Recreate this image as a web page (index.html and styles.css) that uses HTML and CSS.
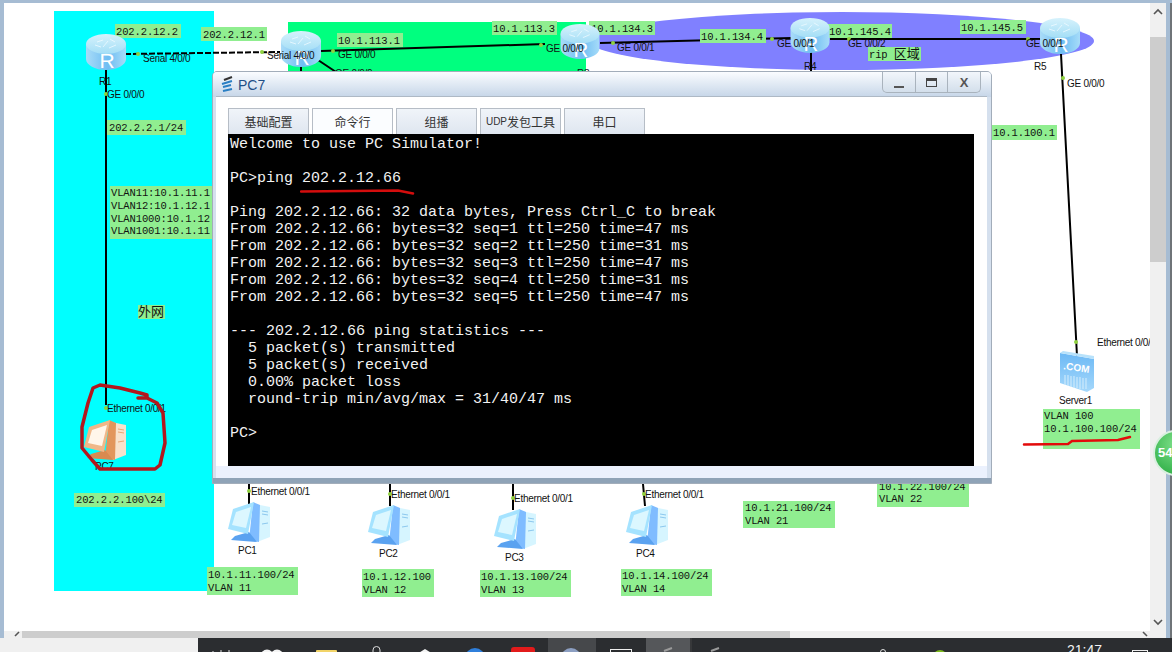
FILE: index.html
```html
<!DOCTYPE html>
<html lang="zh">
<head>
<meta charset="utf-8">
<title>PC7</title>
<link rel="stylesheet" href="styles.css">
</head>
<body>
<svg class="defs" width="0" height="0" aria-hidden="true">
  <defs>
    <linearGradient id="rBody" x1="0" y1="0" x2="1" y2="0">
      <stop offset="0" stop-color="#a9dcf8"/><stop offset=".55" stop-color="#6fbdf2"/><stop offset="1" stop-color="#a6dcf9"/>
    </linearGradient>
    <linearGradient id="rTop" x1="0" y1="0" x2="0" y2="1">
      <stop offset="0" stop-color="#d6f2fc"/><stop offset="1" stop-color="#a4def6"/>
    </linearGradient>
    <linearGradient id="sFront" x1="0" y1="0" x2="0" y2="1">
      <stop offset="0" stop-color="#6db9f5"/><stop offset="1" stop-color="#a5d8fb"/>
    </linearGradient>
    <symbol id="router" viewBox="0 0 40 36">
      <path d="M0 10V25C0 31 9 36 20 36S40 31 40 25V10Z" fill="url(#rBody)"/>
      <ellipse cx="20" cy="10" rx="20" ry="10" fill="url(#rTop)"/>
      <path d="M11 8l6-2M9 11l6 2M24 5l5 3M23 14l7-3M17 13l5-6" class="r-arrows"/>
      <text x="21" y="34" class="r-letter">R</text>
    </symbol>
    <symbol id="pc" viewBox="0 0 44 41">
      <polygon points="28,2 43,5 43,35 30,40" class="pc-tower"/>
      <polygon points="26,0 33,3 32,40 22,38" class="pc-mid"/>
      <polygon points="8,34 22,30 30,40 4,38" class="pc-base"/>
      <polygon points="6,7 27,0 21,32 1,27" class="pc-frame"/>
      <polygon points="9,10 24,5 19,26 5,23" class="pc-screen"/>
      <path d="M35 9l6 1M35 12l6 1M35 22l6-1" class="pc-slots"/>
    </symbol>
  </defs>
</svg>

<main class="workspace">
  <div class="edge-left"></div>
  <div class="canvas-col">
    <div class="canvas">
      <svg class="topo" width="1146" height="628" viewBox="4 3 1146 628">
        <rect x="54" y="11" width="160" height="580" class="zone-cyan"/>
        <rect x="288" y="22" width="298" height="300" class="zone-green"/>
        <ellipse cx="842" cy="41" rx="252" ry="29" class="zone-rip"/>

        <path d="M125 54L280 52" class="link dashed"/>
        <path d="M321 51L545 44M600 43L792 38M830 39L1045 39M106 70V405M1061 54L1077 356M301 66V72M318 60L336 72M811 52V72M249 484V504M390 484V506M513 484V510M643 484L645 506" class="link"/>

        <g class="lbl">
          <rect x="115" y="24" width="66" height="14"/><text x="116" y="35">202.2.12.2</text>
          <rect x="201" y="27" width="66" height="14"/><text x="203" y="38">202.2.12.1</text>
          <rect x="337" y="33" width="66" height="14"/><text x="338" y="44">10.1.113.1</text>
          <rect x="492" y="21" width="65" height="14"/><text x="493" y="32">10.1.113.3</text>
          <rect x="589" y="21" width="66" height="14"/><text x="591" y="32">10.1.134.3</text>
          <rect x="700" y="29" width="66" height="14"/><text x="701" y="40">10.1.134.4</text>
          <rect x="828" y="24" width="64" height="14"/><text x="829" y="35">10.1.145.4</text>
          <rect x="960" y="20" width="66" height="14"/><text x="961" y="31">10.1.145.5</text>
          <rect x="868" y="47" width="53" height="14"/><text x="869" y="58">rip <tspan class="cjk">区域</tspan></text>
          <rect x="991" y="125" width="66" height="15"/><text x="993" y="136">10.1.100.1</text>
          <rect x="107" y="120" width="79" height="15"/><text x="109" y="131">202.2.2.1/24</text>
          <rect x="110" y="186" width="102" height="53"/>
          <text x="111" y="196">VLAN11:10.1.11.1</text>
          <text x="111" y="209">VLAN12:10.1.12.1</text>
          <text x="111" y="222">VLAN1000:10.1.12</text>
          <text x="111" y="234">VLAN1001:10.1.11</text>
          <rect x="138" y="305" width="27" height="14"/><text x="138" y="316" class="cjk">外网</text>
          <rect x="74" y="493" width="91" height="14"/><text x="76" y="503">202.2.2.100\24</text>
          <rect x="207" y="567" width="91" height="28"/><text x="208" y="578">10.1.11.100/24</text><text x="208" y="591">VLAN 11</text>
          <rect x="362" y="569" width="72" height="28"/><text x="363" y="580">10.1.12.100</text><text x="363" y="593">VLAN 12</text>
          <rect x="480" y="570" width="91" height="27"/><text x="481" y="580">10.1.13.100/24</text><text x="481" y="593">VLAN 13</text>
          <rect x="621" y="569" width="91" height="27"/><text x="622" y="579">10.1.14.100/24</text><text x="622" y="592">VLAN 14</text>
          <rect x="743" y="501" width="92" height="27"/><text x="745" y="511">10.1.21.100/24</text><text x="745" y="524">VLAN 21</text>
          <rect x="877" y="479" width="92" height="28"/><text x="879" y="490">10.1.22.100/24</text><text x="879" y="502">VLAN 22</text>
          <rect x="1043" y="409" width="97" height="40"/><text x="1044" y="419">VLAN 100</text><text x="1044" y="432">10.1.100.100/24</text>
        </g>

        <use href="#router" x="86" y="34" width="40" height="36"/>
        <use href="#router" x="281" y="31" width="40" height="36"/>
        <use href="#router" x="560" y="24" width="40" height="35"/>
        <use href="#router" x="790" y="18" width="40" height="35"/>
        <use href="#router" x="1040" y="18" width="40" height="36"/>

        <g class="pc-orange"><use href="#pc" x="83" y="420" width="44" height="41"/></g>
        <g class="pc-blue">
          <use href="#pc" x="227" y="502" width="44" height="41"/>
          <use href="#pc" x="367" y="505" width="44" height="41"/>
          <use href="#pc" x="493" y="509" width="44" height="41"/>
          <use href="#pc" x="625" y="505" width="44" height="41"/>
        </g>

        <polygon points="1060,353 1094,359 1094,388 1087,392 1060,383" fill="url(#sFront)"/>
        <polygon points="1060,353 1063,351 1094,356 1094,359" class="srv-top"/>
        <text x="1076" y="371" transform="rotate(8 1076 371)" class="srv-com">.COM</text>
        <path d="M1065 375V385M1068 375V386M1071 376V387M1074 376V388M1077 377V388M1080 377V389M1083 378V389M1086 378V389" class="srv-bars"/>

        <g class="dots">
          <circle cx="138" cy="54" r="2"/><circle cx="262" cy="52" r="2"/>
          <circle cx="333" cy="51" r="2"/><circle cx="541" cy="45" r="2"/>
          <circle cx="613" cy="43" r="2"/><circle cx="772" cy="39" r="2"/>
          <circle cx="849" cy="39" r="2"/><circle cx="1028" cy="39" r="2"/>
          <circle cx="106" cy="94" r="2"/><circle cx="1063" cy="78" r="2"/>
          <circle cx="1076" cy="342" r="2"/><circle cx="106" cy="408" r="2"/>
          <circle cx="249" cy="491" r="2"/><circle cx="390" cy="494" r="2"/>
          <circle cx="513" cy="498" r="2"/><circle cx="644" cy="494" r="2"/>
        </g>

        <g class="port">
          <text x="143" y="62">Serial 4/0/0</text>
          <text x="267" y="59">Serial 4/0/0</text>
          <text x="338" y="58">GE 0/0/0</text>
          <text x="335" y="77">GE 0/0/0</text>
          <text x="107" y="98">GE 0/0/0</text>
          <text x="546" y="52">GE 0/0/0</text>
          <text x="617" y="51">GE 0/0/1</text>
          <text x="777" y="47">GE 0/0/1</text>
          <text x="848" y="47">GE 0/0/2</text>
          <text x="1026" y="47">GE 0/0/1</text>
          <text x="1067" y="87">GE 0/0/0</text>
          <text x="1097" y="346">Ethernet 0/0/1</text>
          <text x="107" y="412">Ethernet 0/0/1</text>
          <text x="251" y="495">Ethernet 0/0/1</text>
          <text x="391" y="498">Ethernet 0/0/1</text>
          <text x="514" y="502">Ethernet 0/0/1</text>
          <text x="645" y="498">Ethernet 0/0/1</text>
          <text x="99" y="85">R1</text>
          <text x="577" y="77">R3</text>
          <text x="804" y="70">R4</text>
          <text x="1034" y="70">R5</text>
          <text x="95" y="470">PC7</text>
          <text x="238" y="554">PC1</text>
          <text x="379" y="557">PC2</text>
          <text x="505" y="561">PC3</text>
          <text x="636" y="557">PC4</text>
          <text x="1059" y="404">Server1</text>
        </g>

        <path d="M138 398L147 398L147 395L140 393L120 388L100 385L93 388L88 403L82 427L82 448L92 460L100 469L155 469L160 465L165 443L163 413L157 403L147 398" class="scribble"/>
        <path d="M1024 444.500L1068 444L1072 441L1118 440L1130 437" class="underline"/>
      </svg>
    </div>
    <div class="hscroll">
      <svg class="chev" width="10" height="7" viewBox="0 0 10 7"><path d="M7 1L3 5"/></svg>
      <div class="hthumb"></div>
      <div class="hfill"></div>
      <svg class="chev" width="10" height="7" viewBox="0 0 10 7"><path d="M3 1L7 5"/></svg>
    </div>
  </div>
  <div class="vscroll">
    <div class="varrow">
      <svg class="chev" width="10" height="8" viewBox="0 0 10 8"><path d="M1 6L5 2L9 6"/></svg>
    </div>
    <div class="vthumb"></div>
    <div class="vfill"></div>
    <div class="varrow varrow-down">
      <svg class="chev" width="10" height="8" viewBox="0 0 10 8"><path d="M1 2L5 6L9 2"/></svg>
    </div>
  </div>
  <div class="edge-right"></div>

  <section class="window">
    <header class="win-title">
      <svg class="win-icon" width="12" height="18" viewBox="0 0 12 18">
        <path d="M3 4L11 1" class="wi-dark"/>
        <path d="M1 8L11 5M2 11L10 9M2 15L11 13" class="wi-blue"/>
      </svg>
      <span class="win-name">PC7</span>
      <div class="win-controls">
        <div class="win-btn"><span class="ic-min"></span></div>
        <div class="win-btn"><span class="ic-max"></span></div>
        <div class="win-btn ic-close">X</div>
      </div>
    </header>
    <div class="win-body">
      <nav class="tabs">
        <div class="tab">基础配置</div>
        <div class="tab tab-active">命令行</div>
        <div class="tab">组播</div>
        <div class="tab"><span class="tab-latin">UDP</span>发包工具</div>
        <div class="tab">串口</div>
      </nav>
      <pre class="terminal">Welcome to use PC Simulator!

PC&gt;ping 202.2.12.66

Ping 202.2.12.66: 32 data bytes, Press Ctrl_C to break
From 202.2.12.66: bytes=32 seq=1 ttl=250 time=47 ms
From 202.2.12.66: bytes=32 seq=2 ttl=250 time=31 ms
From 202.2.12.66: bytes=32 seq=3 ttl=250 time=47 ms
From 202.2.12.66: bytes=32 seq=4 ttl=250 time=31 ms
From 202.2.12.66: bytes=32 seq=5 ttl=250 time=47 ms

--- 202.2.12.66 ping statistics ---
  5 packet(s) transmitted
  5 packet(s) received
  0.00% packet loss
  round-trip min/avg/max = 31/40/47 ms

PC&gt;</pre>
    </div>
    <svg class="ping-mark" width="116" height="6" viewBox="0 0 116 6"><path d="M1 2.500L98 1.500L113 4.500"/></svg>
  </section>

  <div class="badge">54</div>
</main>

<footer class="taskbar">
  <div class="tb-start"></div>
  <svg class="tb-apps" width="974" height="14" viewBox="198 638 974 14">
    <rect x="548" y="638" width="48" height="14" class="tb-active"/>
    <rect x="646" y="638" width="44" height="14" class="tb-active2"/>
    <path d="M691 638V652" class="tb-div"/>
    <path d="M213 651V652M221 650V652M229 650V652" class="tb-tick"/>
    <circle cx="267" cy="656" r="6.500" class="tb-white"/><circle cx="277" cy="656" r="6.500" class="tb-white"/>
    <rect x="316" y="650" width="21" height="6" rx="1" class="tb-folder"/>
    <path d="M373 652V650A3.500 3.500 0 0 1 380 650V652" class="tb-mic"/>
    <path d="M417 654L425 649L433 654Z" class="tb-white"/>
    <circle cx="475" cy="658" r="10" class="tb-globe"/>
    <circle cx="475" cy="659" r="6" class="tb-white"/>
    <rect x="511" y="647" width="24" height="12" rx="3" class="tb-red"/>
    <circle cx="571" cy="658" r="10" class="tb-steel"/>
    <rect x="610.500" y="649.500" width="21" height="8" class="tb-outline"/>
    <path d="M664 651L672 648M711 651L719 648" class="tb-tool"/>
    <circle cx="883" cy="652" r="2.500" class="tb-mic"/>
    <circle cx="940" cy="657" r="7" class="tb-lime"/>
    <text x="1067" y="655" class="tb-time">21:47</text>
    <rect x="1132.500" y="650.500" width="15" height="8" class="tb-outline"/>
  </svg>
</footer>
</body>
</html>
```
FILE: styles.css
```css
* { box-sizing: border-box; }
html, body { margin: 0; padding: 0; width: 1172px; height: 652px; overflow: hidden; background: #fff; }
body { display: flex; flex-direction: column; font-family: "Liberation Sans", sans-serif; }
.defs { position: absolute; }

.workspace { position: relative; display: flex; height: 638px; width: 1172px; border-top: 3px solid #a6bcd3; overflow: hidden; flex: none; }
.edge-left { width: 4px; background: #a6bcd3; flex: none; }
.edge-right { width: 6px; background: linear-gradient(90deg, #a6bcd3 0 4px, #6f7478 4px); flex: none; }
.canvas-col { flex: 1; display: flex; flex-direction: column; min-width: 0; }
.canvas { height: 628px; overflow: hidden; background: #fff; flex: none; }
.topo { display: block; }

.hscroll { flex: 1; display: flex; align-items: center; background: #f0f0f0; }
.hscroll .chev:first-child { margin-left: 8px; margin-right: 0; }
.hthumb { width: 768px; height: 100%; background: #cdcdcd; }
.hfill { flex: 1; }
.chev { flex: none; }
.chev path { fill: none; stroke: #555; stroke-width: 1.600; }

.vscroll { width: 16px; display: flex; flex-direction: column; background: #f0f0f0; flex: none; }
.varrow { height: 34px; display: flex; justify-content: center; padding-top: 5px; }
.varrow-down { height: 20px; padding-top: 0; }
.vthumb { height: 225px; background: #cdcdcd; }
.vfill { flex: 1; }

.zone-cyan { fill: #00ffff; }
.zone-green { fill: #00ff7f; }
.zone-rip { fill: #8080ff; }
.link { fill: none; stroke: #000; stroke-width: 2; }
.dashed { stroke-dasharray: 6 2; }
.dots circle { fill: #8fd13f; }

.lbl rect { fill: #90ee90; }
.lbl text { font: 10.500px "Liberation Mono", "Noto Sans CJK SC", monospace; letter-spacing: -.12px; fill: #111; }
.lbl .cjk { font: 13px "Noto Sans CJK SC", sans-serif; letter-spacing: 0; }
.port text { font: 10px "Liberation Sans", sans-serif; letter-spacing: -.28px; fill: #111; }

.r-arrows { fill: none; stroke: #eefaff; stroke-width: 1; opacity: .8; }
.r-letter { font: 21px "Liberation Sans", sans-serif; fill: #fff; text-anchor: middle; }

.pc-blue { --tower: #d6f5ff; --mid: #7fbcff; --base: #5aa2f0; --frame: #a5e3ff; --screen: #dcf7ff; --slot: #8cc8ee; }
.pc-orange { --tower: #f8e2cc; --mid: #e2965c; --base: #d98a50; --frame: #f0b888; --screen: #fff6ea; --slot: #e8a878; }
.pc-tower { fill: var(--tower); }
.pc-mid { fill: var(--mid); }
.pc-base { fill: var(--base); }
.pc-frame { fill: var(--frame); }
.pc-screen { fill: var(--screen); }
.pc-slots { stroke: var(--slot); stroke-width: 1; fill: none; }

.srv-top { fill: #b8e2fb; }
.srv-com { font: bold 10px "Liberation Sans", sans-serif; fill: #fff; text-anchor: middle; }
.srv-bars { stroke: #d6eefc; stroke-width: 1; fill: none; }

.scribble { fill: none; stroke: #b3171d; stroke-width: 3.500; stroke-linejoin: round; stroke-linecap: round; }
.underline { fill: none; stroke: #e30b0b; stroke-width: 2.500; stroke-linecap: round; }

.window { position: absolute; left: 212px; top: 68px; width: 780px; height: 413px; display: flex; flex-direction: column; padding: 0 4px 5px 3px; background: #8fa3b7; border: 1px solid #a2adba; border-radius: 5px 5px 0 0; }
.window::before { content: ""; position: absolute; inset: 0 0 5px 0; background: #d5e0ee; border-radius: 4px 4px 0 0; }
.win-title { position: relative; height: 25px; margin: 0 -4px 0 -3px; padding-left: 8px; display: flex; align-items: center; gap: 5px; background: linear-gradient(#fafcff, #c6d6e8); border-radius: 4px 4px 0 0; flex: none; }
.win-icon { flex: none; }
.wi-dark { stroke: #333; stroke-width: 2; fill: none; }
.wi-blue { stroke: #2a7fc4; stroke-width: 2; fill: none; }
.win-name { font-size: 14px; color: #1f4f86; }
.win-controls { margin-left: auto; margin-right: 10px; height: 21px; width: 99px; display: flex; border: 1px solid #a9b3bd; border-top: 0; border-radius: 0 0 5px 5px; align-self: flex-start; background: linear-gradient(#f2f6fb, #d3dfeb); }
.win-btn { flex: 1; display: flex; align-items: center; justify-content: center; border-left: 1px solid #a9b3bd; }
.win-btn:first-child { border-left: 0; }
.ic-min { width: 10px; height: 2px; background: #555; margin-top: 9px; }
.ic-max { width: 11px; height: 9px; border: 1px solid #444; border-top-width: 3px; }
.ic-close { font-size: 13px; color: #555; font-weight: bold; }
.win-body { position: relative; flex: 1; padding: 11px 13px 12px 12px; display: flex; flex-direction: column; background: linear-gradient(#fff 0 369px, #ebf1fd 369px); border-top: 1px solid #aeb9c5; min-height: 0; margin-top: -1px; }
.tabs { display: flex; gap: 3px; height: 26px; flex: none; }
.tab { width: 81px; display: flex; align-items: center; justify-content: center; font: 12px "Noto Sans CJK SC", "Liberation Sans", sans-serif; color: #333; border: 1px solid #b6bdc6; border-bottom: 0; background: linear-gradient(#f0f4f9, #dfe6f0); white-space: nowrap; }
.tab-active { background: #fbfdff; }
.tab-latin { font: 10px "Liberation Sans", sans-serif; }
.terminal { margin: 0; padding: 2px 2px 0; width: 746px; height: 332px; flex: none; background: #000; color: #f2f2f2; font: 15px/17px "Liberation Mono", monospace; overflow: hidden; }
.ping-mark { position: absolute; left: 87px; top: 117px; }
.ping-mark path { fill: none; stroke: #d40d0d; stroke-width: 2.500; stroke-linecap: round; }

.badge { position: absolute; left: 1153px; top: 427px; width: 46px; height: 46px; border-radius: 50%; background: radial-gradient(circle at 50% 30%, #7fe08a, #25a83e); border: 2px solid #d9efe0; color: #fff; font-weight: bold; font-size: 13px; line-height: 42px; padding-left: 3px; }

.taskbar { height: 14px; display: flex; flex: none; overflow: hidden; }
.tb-start { width: 198px; background: #f0f0f0; flex: none; }
.tb-apps { display: block; background: #2b2d30; flex: none; }
.tb-active { fill: #46484b; }
.tb-active2 { fill: #55575a; }
.tb-div { stroke: #444; stroke-width: 1; }
.tb-tick { stroke: #ddd; stroke-width: 1; }
.tb-white { fill: #f4f4f4; }
.tb-folder { fill: #f2d468; }
.tb-mic { fill: none; stroke: #ddd; stroke-width: 1; }
.tb-globe { fill: #2f7fdb; }
.tb-red { fill: #e21b1b; }
.tb-steel { fill: #8c9fc2; }
.tb-outline { fill: none; stroke: #eee; stroke-width: 1; }
.tb-tool { stroke: #9a9a9a; stroke-width: 2; }
.tb-lime { fill: #7dbb1e; }
.tb-time { font: 14px "Liberation Sans", sans-serif; fill: #f2f2f2; }
```
